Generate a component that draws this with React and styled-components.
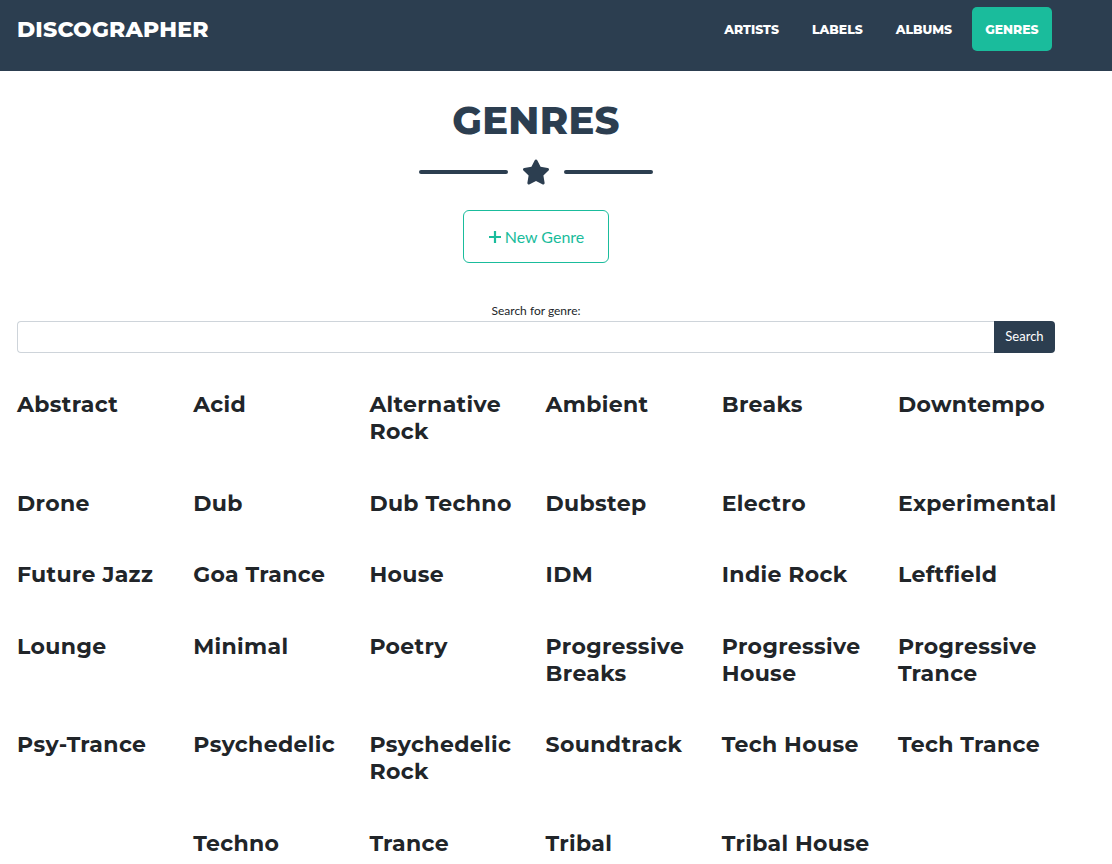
import React from "react";
import styled, { createGlobalStyle } from "styled-components";

const Global = createGlobalStyle`
  html, body { margin: 0; padding: 0; background: #fff; }
  body { font-family: "Lato", "Liberation Sans", sans-serif; color: #212529; }
  * { box-sizing: border-box; }
`;

const HEAD = `"Montserrat", "Open Sans", "Liberation Sans", sans-serif`;

const Nav = styled.nav`
  background: #2c3e50;
  height: 71px;
  padding: 7px 0 20px;
`;

const NavInner = styled.div`
  margin: 0 17px;
  width: 1038px;
  height: 44px;
  display: flex;
  align-items: center;
  justify-content: space-between;
`;

const Brand = styled.a`
  font-family: ${HEAD};
  font-weight: 800;
  font-size: 22px;
  color: #fff;
  letter-spacing: 0.2px;
  text-decoration: none;
`;

const Links = styled.div`
  display: flex;
  align-items: center;
  height: 44px;
  margin-right: 3px;
`;

const NavLink = styled.a`
  font-family: ${HEAD};
  font-weight: 800;
  font-size: 12.4px;
  color: #fff;
  text-decoration: none;
  height: 44px;
  display: flex;
  align-items: center;
  padding: 0 13.5px;
  margin-left: 6px;
  border-radius: 5px;
  background: ${(p) => (p.$active ? "#1abc9c" : "transparent")};
`;

const Main = styled.main`
  margin: 0 17px;
  width: 1038px;
  display: flex;
  flex-direction: column;
  align-items: center;
`;

const Title = styled.h2`
  font-family: ${HEAD};
  font-weight: 800;
  font-size: 38.5px;
  line-height: 50px;
  color: #2c3e50;
  margin: 25px 0 0;
  letter-spacing: 0.3px;
`;

const Divider = styled.div`
  margin-top: 12px;
  display: flex;
  align-items: center;
  gap: 14px;
  height: 28px;
`;

const Line = styled.span`
  display: block;
  width: 89px;
  height: 4px;
  border-radius: 2px;
  background: #2c3e50;
`;

const NewButton = styled.button`
  margin-top: 24px;
  width: 146px;
  height: 53px;
  border: 1px solid #1abc9c;
  border-radius: 6px;
  background: #fff;
  color: #1abc9c;
  font-family: "Lato", sans-serif;
  font-size: 16px;
  display: flex;
  align-items: center;
  justify-content: center;
  gap: 3px;
  padding: 0;
`;

const Label = styled.label`
  margin-top: 39px;
  font-family: "Lato", sans-serif;
  font-size: 12px;
  line-height: 18px;
  color: #212529;
`;

const SearchRow = styled.div`
  margin-top: 1px;
  width: 100%;
  display: flex;
  height: 32px;
`;

const Input = styled.input`
  flex: 1;
  height: 32px;
  border: 1px solid #ced4da;
  border-right: none;
  border-radius: 4px 0 0 4px;
  outline: none;
`;

const SearchBtn = styled.button`
  width: 61px;
  height: 32px;
  border: none;
  border-radius: 0 4px 4px 0;
  background: #2c3e50;
  color: #fff;
  font-family: "Lato", sans-serif;
  font-size: 13px;
  padding: 0 0 2px;
`;

const Grid = styled.div`
  margin-top: 38px;
  width: 100%;
  display: grid;
  grid-template-columns: repeat(6, 176.2px);
  row-gap: 44.5px;
  align-self: flex-start;
`;

const Genre = styled.h4`
  margin: 0;
  font-family: ${HEAD};
  font-weight: 700;
  font-size: 22px;
  line-height: 27px;
  letter-spacing: 0.35px;
  color: #212529;
  padding-right: 8px;
`;

const genres = [
  "Abstract", "Acid", "Alternative Rock", "Ambient", "Breaks", "Downtempo",
  "Drone", "Dub", "Dub Techno", "Dubstep", "Electro", "Experimental",
  "Future Jazz", "Goa Trance", "House", "IDM", "Indie Rock", "Leftfield",
  "Lounge", "Minimal", "Poetry", "Progressive Breaks", "Progressive House", "Progressive Trance",
  "Psy-Trance", "Psychedelic", "Psychedelic Rock", "Soundtrack", "Tech House", "Tech Trance",
  "", "Techno", "Trance", "Tribal", "Tribal House",
];

const Star = () => (
  <svg width="28" height="28" viewBox="0 0 576 512">
    <path
      fill="#2c3e50"
      d="M259.3 17.8L194 150.2 47.9 171.5c-26.2 3.8-36.7 36.1-17.7 54.6l105.7 103-25 145.5c-4.5 26.3 23.2 46 46.4 33.7L288 439.6l130.7 68.7c23.2 12.2 50.9-7.4 46.4-33.7l-25-145.5 105.7-103c19-18.5 8.5-50.8-17.7-54.6L382 150.2 316.7 17.8c-11.7-23.6-45.6-23.9-57.4 0z"
    />
  </svg>
);

export default function App() {
  return (
    <>
      <Global />
      <Nav>
        <NavInner>
          <Brand href="#">DISCOGRAPHER</Brand>
          <Links>
            <NavLink href="#">ARTISTS</NavLink>
            <NavLink href="#">LABELS</NavLink>
            <NavLink href="#">ALBUMS</NavLink>
            <NavLink href="#" $active>GENRES</NavLink>
          </Links>
        </NavInner>
      </Nav>
      <Main>
        <Title>GENRES</Title>
        <Divider>
          <Line />
          <Star />
          <Line />
        </Divider>
        <NewButton>
          <svg width="14" height="14" viewBox="0 0 14 14">
            <path d="M7 1v12M1 7h12" stroke="#1abc9c" strokeWidth="2.2" />
          </svg>
          New Genre
        </NewButton>
        <Label>Search for genre:</Label>
        <SearchRow>
          <Input type="text" />
          <SearchBtn>Search</SearchBtn>
        </SearchRow>
        <Grid>
          {genres.map((g, i) => (
            <Genre key={i}>{g}</Genre>
          ))}
        </Grid>
      </Main>
    </>
  );
}
